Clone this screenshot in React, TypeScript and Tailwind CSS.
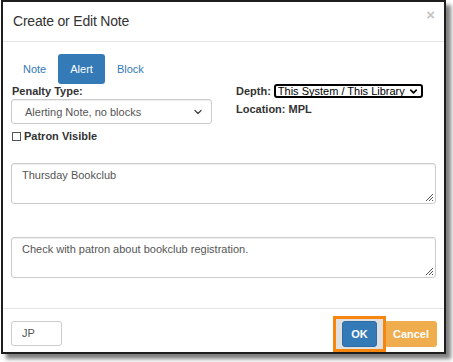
import { ChevronDown } from "lucide-react";

function Textarea({ text }: { text: string }) {
  return (
    <div className="relative h-[41px] rounded-[3px] border border-[#ccc] px-[10px] pt-[4px] leading-[14px] text-[11px] text-[#555] shadow-[inset_0_1px_1px_rgba(0,0,0,0.075)]">
      {text}
      <svg className="absolute bottom-[1px] right-[1px]" width="9" height="9" viewBox="0 0 9 9">
        <path d="M8 1L1 8M8 4L4 8M8 7L7 8" stroke="#555" strokeWidth="1" />
      </svg>
    </div>
  );
}

export default function App() {
  return (
    <div className="w-[453px] h-[362px] bg-white font-['Liberation_Sans',Arial,sans-serif] text-[#333]">
      <div className="ml-[1px] w-[445px] h-[354px] border-2 border-[#1e1e1e] bg-white shadow-[5px_5px_4px_rgba(0,0,0,0.5)] flex flex-col">
        <div className="h-[40px] border-b border-[#e5e5e5] flex items-center justify-between pl-[10px] pr-[9px]">
          <span className="text-[14px] text-[#333] tracking-[-0.2px]">Create or Edit Note</span>
          <span className="text-[15px] font-bold text-[#c4c4c4] -mt-[12px]">×</span>
        </div>

        <div className="flex-1 px-[8px]">
          <div className="flex mt-[12px] ml-[3px] h-[30px] text-[11px]">
            <span className="pl-[9px] pr-[12px] flex items-center text-[#337ab7]">Note</span>
            <span className="px-[12px] flex items-center bg-[#337ab7] text-white rounded-[3px]">Alert</span>
            <span className="px-[12px] flex items-center text-[#337ab7]">Block</span>
          </div>

          <div className="flex text-[11px] leading-[14px]">
            <div className="w-[225px]">
              <div className="font-bold ml-[1px]">Penalty Type:</div>
              <div className="mt-[1px] w-[201px] h-[25px] border border-[#ccc] rounded-[3px] flex items-center justify-between pl-[13px] pr-[7px] text-[#555] shadow-[inset_0_1px_1px_rgba(0,0,0,0.075)]">
                <span>Alerting Note, no blocks</span>
                <ChevronDown size={12} strokeWidth={2.5} className="text-[#444]" />
              </div>
              <label className="flex items-center gap-[3px] mt-[5px] font-bold ml-[1px]">
                <span className="w-[9px] h-[9px] border border-[#555] inline-block"></span>
                Patron Visible
              </label>
            </div>
            <div>
              <div className="flex items-center gap-[3px] font-bold h-[14px]">
                Depth:
                <span className="flex items-center gap-[3px] h-[14px] border-2 border-black rounded-[3px] px-[2px] font-normal text-black">
                  This System / This Library
                  <ChevronDown size={11} strokeWidth={3.5} />
                </span>
              </div>
              <div className="font-bold mt-[4px]">Location: MPL</div>
            </div>
          </div>

          <div className="mt-[20px]">
            <Textarea text="Thursday Bookclub" />
          </div>
          <div className="mt-[33px]">
            <Textarea text="Check with patron about bookclub registration." />
          </div>
        </div>

        <div className="h-[44px] border-t border-[#e5e5e5] flex items-start justify-between pl-[8px] pr-[7px] pt-[12px]">
          <div className="w-[51px] h-[25px] border border-[#ccc] rounded-[3px] flex items-center pl-[10px] text-[11px] text-[#555]">JP</div>
          <div className="flex items-center">
            <div className="relative">
              <div className="absolute -inset-x-[9px] -top-[5px] -bottom-[5px] border-[3px] border-[#f7860f] bg-[rgba(0,0,0,0.12)]"></div>
              <button className="relative w-[35px] h-[26px] bg-[#337ab7] border border-[#2e6da4] rounded-[3px] text-white text-[11px] font-bold">OK</button>
            </div>
            <button className="ml-[8px] w-[52px] h-[26px] bg-[#f0ad4e] rounded-[3px] text-white text-[11px] font-bold">Cancel</button>
          </div>
        </div>
      </div>
    </div>
  );
}
